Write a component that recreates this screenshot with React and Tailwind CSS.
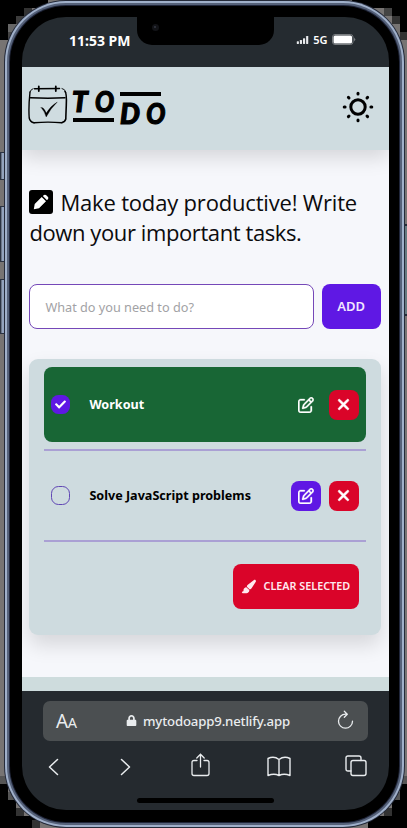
import React from "react";
import { FaCheck, FaLock } from "react-icons/fa";
import { FaPaintbrush, FaXmark, FaRegPenToSquare } from "react-icons/fa6";

const SANS = "font-['Noto_Sans','Open_Sans',sans-serif]";

const CORNER_BLACK = [
  [0, 0, 48, 8], [0, 8, 32, 8], [0, 16, 24, 8], [0, 24, 8, 16],
  [352, 0, 55, 8], [384, 8, 23, 8], [392, 16, 15, 8], [400, 24, 7, 16],
  [0, 784, 8, 44], [0, 800, 16, 28], [0, 808, 24, 20], [0, 816, 40, 12],
  [400, 784, 7, 44], [392, 800, 15, 28], [384, 808, 23, 20], [368, 816, 39, 12],
];
const CORNER_GREY = [
  [24, 8, 8, 8, "#333"], [16, 16, 8, 8, "#3c3c3c"], [8, 24, 8, 8, "#666"], [8, 32, 8, 8, "#444"],
  [384, 8, 8, 8, "#444"], [392, 16, 8, 8, "#333"], [400, 32, 7, 8, "#333"],
  [0, 776, 8, 8, "#555"], [8, 792, 8, 8, "#555"], [16, 808, 8, 8, "#333"], [32, 820, 8, 8, "#333"],
  [400, 776, 7, 8, "#555"], [392, 792, 8, 8, "#555"], [384, 808, 8, 8, "#333"],
];

function Backdrop() {
  return (
    <svg className="absolute inset-0" width="407" height="828" shapeRendering="crispEdges">
      <rect width="407" height="828" fill="#777473" />
      {CORNER_BLACK.map(([x, y, w, h], i) => (
        <rect key={i} x={x} y={y} width={w} height={h} fill="#000" />
      ))}
      {CORNER_GREY.map(([x, y, w, h, c], i) => (
        <rect key={i} x={x} y={y} width={w} height={h} fill={c} />
      ))}
      {[[152, 28], [206, 56], [279, 55]].map(([y, h]) => (
        <g key={y}>
          <rect x="0" y={y} width="5" height={h} fill="#2b3342" />
          <rect x="1" y={y + 1} width="1" height={h - 2} fill="#6d7789" />
          <rect x="2" y={y + 1} width="2" height={h - 2} fill="#93a3bd" />
        </g>
      ))}
      <rect x="405" y="224" width="2" height="92" fill="#242b3a" />
      <rect x="405" y="226" width="2" height="88" fill="#667a80" />
    </svg>
  );
}

function StatusBar() {
  return (
    <div className="relative flex h-[50px] shrink-0 items-start justify-between bg-[#252b30] pl-[47px] pr-[33px] pt-[15px]">
      <span className="text-[14px] font-bold leading-[18px] text-white">11:53 PM</span>
      <div className="flex h-[16px] items-center pt-[1px]">
        <svg className="-translate-y-[1px]" width="14" height="8" viewBox="0 0 14 9" fill="#e8eaec">
          <rect x="0" y="6" width="2.4" height="3" rx=".5" />
          <rect x="3.5" y="4.5" width="2.4" height="4.5" rx=".5" />
          <rect x="7" y="2.5" width="2.4" height="6.5" rx=".5" />
          <rect x="10.5" y="0" width="2.4" height="9" rx=".5" />
        </svg>
        <span className="ml-[3px] -translate-y-[1px] text-[11px] font-semibold leading-none text-white">5G</span>
        <svg className="ml-[4px] -translate-y-[1px]" width="24" height="11" viewBox="0 0 24 11">
          <rect x=".5" y=".5" width="20.5" height="10" rx="2.5" fill="none" stroke="#777b7e" />
          <rect x="1.5" y="1.5" width="18.5" height="8" rx="1.5" fill="#fff" />
          <path d="M22 3.5v4l1.5-2z" fill="#777b7e" />
        </svg>
      </div>
      <div className="absolute left-[115px] top-0 h-[28px] w-[137px] rounded-b-[15px] bg-black">
        <div className="absolute left-[15px] top-[7px] size-[7px] rounded-full bg-[#121317]">
          <div className="ml-[2px] mt-[2px] size-[2px] rounded-full bg-[#343943]" />
        </div>
      </div>
    </div>
  );
}

function Logo() {
  const letter = "block font-['Lato',sans-serif] font-black italic text-[28px] leading-[22px] [-webkit-text-stroke:1.2px_black]";
  return (
    <div className="flex items-start">
      <svg width="40" height="40" viewBox="0 0 40 40" fill="none" stroke="#000" strokeLinecap="round">
        <path d="M2 7Q.4 22 1.2 33Q2 37 6 37.8" strokeWidth="1.4" />
        <path d="M37 6.5Q38.8 8 38.3 20T37.8 34Q37 37 34 37.5" strokeWidth="1.6" />
        <path d="M5 3.7Q2.8 4.2 2 7M34 3.5Q37 4 37.8 7" strokeWidth=".9" />
        <path d="M6 37.8Q20 36.4 34 37.8M2.5 12.8Q20 13.6 37 12.8" strokeWidth="1.4" />
        <path d="M6.5 3.8L31.5 3.4" strokeWidth="1.5" />
        <path d="M10.8 1.5V6M27.8 1.5V6" strokeWidth="1.8" />
        <path d="M13.2 22.6Q15.5 22 18.3 28Q23 20.5 29.3 17Q22.5 23.5 18.2 32Q16.3 26 13.2 22.6Z" fill="#000" strokeWidth=".3" />
      </svg>
      <div className="ml-[5px] flex w-[44px] flex-col pt-[5px]">
        <div className="flex h-[28px] items-start">
          <span className={letter + " w-[22px] -translate-x-[1px]"}>T</span>
          <span className={letter + " w-[23px] -translate-x-[1px] scale-x-90"}>O</span>
        </div>
        <div className="h-[4px] w-[41px] bg-black" />
      </div>
      <div className="ml-[3px] flex flex-col pt-[7px]">
        <div className="h-[4px] w-[41px] bg-black" />
        <div className="flex pt-[6px]">
          <span className={letter + " w-[26px]"}>D</span>
          <span className={letter + " w-[23px] -translate-x-[1px] scale-x-90"}>O</span>
        </div>
      </div>
    </div>
  );
}

function SunIcon() {
  return (
    <svg width="32" height="32" viewBox="0 0 32 32" fill="none" stroke="#000" strokeWidth="3" strokeLinecap="round">
      <circle cx="16" cy="16" r="7.2" />
      <path d="M16 2.2v.9M16 28.9v.9M2.2 16h.9M28.9 16h.9M6.4 6.4l.6.6M25 25l.6.6M6.4 25.6l.6-.6M25 7l.6-.6" />
    </svg>
  );
}

function PenBadge() {
  return (
    <svg className="mr-[7px] inline-block align-[-3px]" width="24" height="24" viewBox="0 0 24 24">
      <rect width="24" height="24" rx="3" />
      <path d="M4.8 19.2l.9-5.2 7-7 4.3 4.3-7 7zM13.8 6l1.2-1q1-.7 2 .1l2 2q.8 1 0 2l-1 1.1z" fill="#fff" />
    </svg>
  );
}

function Task({ label, done }) {
  return (
    <div className="border-b-2 border-[#aaa0d4] pb-[7px] pt-[7px] first:pt-[8px]">
      <div className={"flex h-[75px] items-center rounded-[8px] pl-[7px] pr-[7px] " + (done ? "bg-[#186635] text-white" : "text-black")}>
        <span
          className={
            "flex size-[19px] items-center justify-center rounded-[7.5px] " +
            (done ? "bg-[#5f18e4]" : "border border-[#6046b4]")
          }
        >
          {done && <FaCheck size={11} color="#fff" />}
        </span>
        <span className="ml-[19px] grow whitespace-nowrap pt-[2px] text-[12.6px] font-bold">{label}</span>
        <span className={"flex size-[30px] items-center justify-center rounded-[8px] text-white " + (done ? "" : "bg-[#5f18e4]")}>
          <FaRegPenToSquare size={16} stroke="white" strokeWidth={10} />
        </span>
        <span className="ml-[8px] flex size-[30px] items-center justify-center rounded-[8px] bg-[#da0429] text-white">
          <FaXmark size={17} stroke="white" strokeWidth={16} />
        </span>
      </div>
    </div>
  );
}

function Page() {
  return (
    <div className="flex h-[624px] shrink-0 flex-col overflow-hidden bg-[#f6f7fb]">
      <header className="flex h-[83px] shrink-0 items-start justify-between bg-[#cfdce0] pl-[6px] pr-[14.5px] pt-[18px] shadow-[0_8px_18px_rgba(0,0,0,0.13)]">
        <Logo />
        <div className="pt-[6px]">
          <SunIcon />
        </div>
      </header>
      <main className="flex grow flex-col pl-[7.4px] pr-[8px] pt-[37px]">
        <h1 className="h-[60px] whitespace-nowrap font-['Open_Sans','Noto_Sans',sans-serif] text-[22px] font-normal leading-[30px] text-[#0b0b0d]">
          <PenBadge />
          <span className="tracking-[-0.18px]">Make today productive! Write</span>
          <br />
          <span className="tracking-[-0.4px]">down your important tasks.</span>
        </h1>
        <div className="mt-[37px] flex h-[45px] gap-[7.5px]">
          <div className="flex w-[285px] items-center rounded-[8px] border border-[#7548b8] bg-white pl-[15px] pt-[2px] text-[12.7px] text-[#a2a2a5]">
            What do you need to do?
          </div>
          <div className="flex grow items-center justify-center rounded-[8px] bg-[#5f18e4] text-[13px] font-semibold text-[#f1e6ff]">
            ADD
          </div>
        </div>
        <section className="mt-[30px] h-[276px] rounded-[9px] bg-[#cedbdf] px-[15px] shadow-[0_10px_20px_rgba(0,0,0,0.13)]">
          <div>
            <Task label="Workout" done />
            <Task label="Solve JavaScript problems" />
          </div>
          <div className="mt-[21.5px] flex justify-end pr-[7px]">
            <div className="flex h-[45px] w-[126px] items-center rounded-[8px] bg-[#da0429] pl-[8px] text-[#ffe9ef]">
              <FaPaintbrush size={15} />
              <span className="ml-[8px] whitespace-nowrap pt-[1px] text-[10.8px] font-semibold">CLEAR SELECTED</span>
            </div>
          </div>
        </section>
      </main>
      <footer className="h-[14px] shrink-0 bg-[#cedcdd]" />
    </div>
  );
}

function BrowserBar() {
  const line = { fill: "none", stroke: "#e9ecee", strokeWidth: 1.5, strokeLinecap: "round", strokeLinejoin: "round" };
  return (
    <div className="flex grow flex-col bg-[#252a2f] pl-[21px] pr-[21px] pt-[9.5px] text-[#e9ecee]">
      <div className="flex h-[40px] items-center rounded-[7px] bg-[#4b4f51] pl-[13px] pr-[14px]">
        <span className="w-[70px] pt-[2px] text-[19px] leading-none tracking-[-0.3px]">
          A<span className="text-[14.5px]">A</span>
        </span>
        <FaLock size={11} />
        <span className="ml-[6px] grow whitespace-nowrap pt-[3px] text-[13.2px] font-medium tracking-[-0.16px]">mytodoapp9.netlify.app</span>
        <svg className="-translate-y-[1px]" width="17" height="20" viewBox="0 0 17 20" {...line} strokeWidth="1.3">
          <path d="M10 4.2H8.5A7 7 0 1 0 15.5 11.2M7.3 1.3L10.3 4.2L7.3 7.2" />
        </svg>
      </div>
      <div className="mt-[12px] flex h-[28px] items-center pl-[5px]">
        <svg width="11" height="18" viewBox="0 0 11 18" {...line}><path d="M9.5 1.5L1.5 9l8 7.5" /></svg>
        <svg className="ml-[61px]" width="11" height="18" viewBox="0 0 11 18" {...line}><path d="M1.5 1.5l8 7.5-8 7.5" /></svg>
        <svg className="ml-[60px] -translate-y-[2px]" width="19" height="24" viewBox="0 0 19 24" {...line} strokeWidth="1.3">
          <path d="M6 7.5H3Q1 7.5 1 9.5V20.5Q1 22.5 3 22.5H16Q18 22.5 18 20.5V9.5Q18 7.5 16 7.5H13M9.5 14V1.2M5.8 5L9.5 1.2L13.2 5" />
        </svg>
        <svg className="ml-[57px]" width="24" height="21" viewBox="0 0 24 21" {...line} strokeWidth="1.4">
          <path d="M12 3.5Q7-.5 1 2.5V19.5Q7 17 12 19.5Q17 17 23 19.5V2.5Q17-.5 12 3.5V19.5" />
        </svg>
        <svg className="ml-[54px] -translate-y-[1px]" width="22" height="22" viewBox="0 0 22 22" {...line} strokeWidth="1.4">
          <rect x="6" y="5.5" width="15" height="15" rx="2" />
          <path d="M6 16H3Q1 16 1 14V3Q1 1 3 1H14Q16 1 16 3V5.5" />
        </svg>
      </div>
      <div className="ml-[94px] mt-[17px] h-[5px] w-[137px] rounded-full bg-black" />
    </div>
  );
}

export default function App() {
  return (
    <div className={"relative h-[828px] w-[407px] overflow-hidden " + SANS}>
      <Backdrop />
      <div className="relative ml-[4px] h-[828px] w-[401px] rounded-[62px] bg-[#252b3a] p-[1px]">
        <div className="h-full rounded-[61px] bg-[#a0b0ca] p-[2px]">
          <div className="h-full rounded-[59px] bg-[#56627a] p-[2px]">
            <div className="h-full rounded-[57px] bg-[#20263a] p-[1px]">
              <div className="h-full rounded-[56px] bg-black pb-[12px] pl-[12px] pr-[10.5px] pt-[11px]">
                <div className="flex h-full flex-col overflow-hidden rounded-[44px]">
                  <StatusBar />
                  <Page />
                  <BrowserBar />
                </div>
              </div>
            </div>
          </div>
        </div>
      </div>
    </div>
  );
}
